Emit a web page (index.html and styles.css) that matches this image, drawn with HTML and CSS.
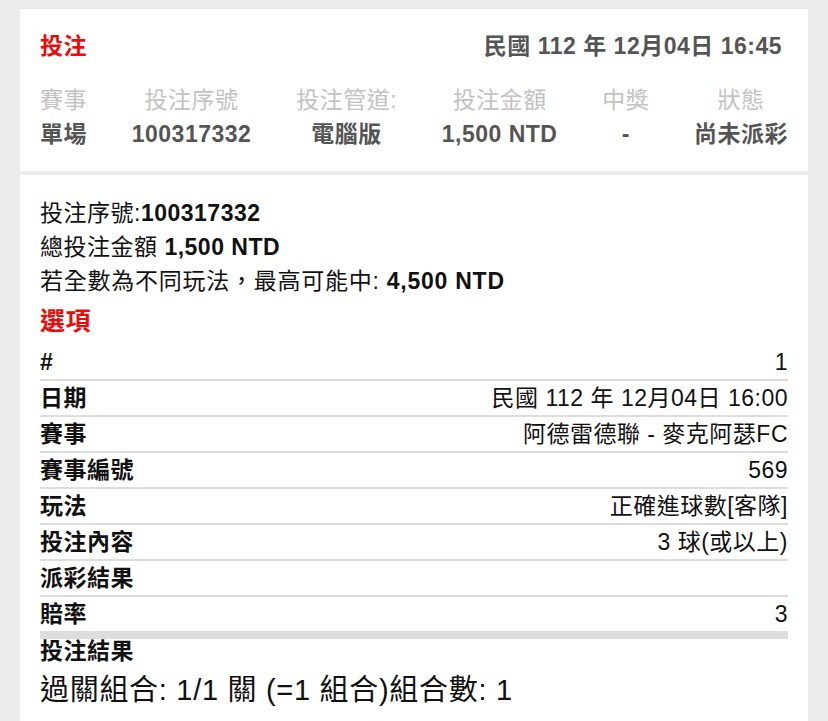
FILE: index.html
```html
<!DOCTYPE html>
<html lang="zh-Hant">
<head>
<meta charset="utf-8">
<title>投注</title>
<link rel="stylesheet" href="styles.css">
</head>
<body>
<div class="page">
  <section class="card summary">
    <div class="summary-head">
      <h1 class="title">投注</h1>
      <div class="date">民國 112 年 12月04日 16:45</div>
    </div>
    <div class="cols">
      <div class="col"><div class="lbl">賽事</div><div class="val">單場</div></div>
      <div class="col"><div class="lbl">投注序號</div><div class="val">100317332</div></div>
      <div class="col"><div class="lbl">投注管道:</div><div class="val">電腦版</div></div>
      <div class="col"><div class="lbl">投注金額</div><div class="val">1,500 NTD</div></div>
      <div class="col"><div class="lbl">中獎</div><div class="val">-</div></div>
      <div class="col"><div class="lbl">狀態</div><div class="val">尚未派彩</div></div>
    </div>
  </section>
  <section class="card detail">
    <div class="line">投注序號:<b>100317332</b></div>
    <div class="line">總投注金額 <b>1,500 NTD</b></div>
    <div class="line wide">若全數為不同玩法，最高可能中: <b>4,500 NTD</b></div>
    <h2 class="section-title">選項</h2>
    <div class="rows">
      <div class="row"><span class="k">#</span><span class="v">1</span></div>
      <div class="row"><span class="k">日期</span><span class="v">民國 112 年 12月04日 16:00</span></div>
      <div class="row"><span class="k">賽事</span><span class="v">阿德雷德聯 - 麥克阿瑟FC</span></div>
      <div class="row"><span class="k">賽事編號</span><span class="v">569</span></div>
      <div class="row"><span class="k">玩法</span><span class="v">正確進球數[客隊]</span></div>
      <div class="row"><span class="k">投注內容</span><span class="v">3 球(或以上)</span></div>
      <div class="row"><span class="k">派彩結果</span><span class="v"></span></div>
      <div class="row last"><span class="k">賠率</span><span class="v">3</span></div>
    </div>
    <div class="result-title">投注結果</div>
    <div class="result">過關組合: 1/1 關 (=1 組合)組合數: 1</div>
  </section>
</div>
</body>
</html>
```
FILE: styles.css
```css
html, body {
  margin: 0;
  padding: 0;
  background: #ececec;
}
body {
  font-family: "Liberation Sans", "Noto Sans CJK TC", sans-serif;
  font-size: 23px;
  letter-spacing: 0.5px;
  color: #111;
}
.page {
  padding: 9px 20px 0 20px;
  display: flex;
  flex-direction: column;
  gap: 4px;
}
.card {
  background: #fff;
}
.summary {
  padding: 20px 20px 20px 20px;
}
.summary-head {
  display: flex;
  justify-content: space-between;
  align-items: center;
  line-height: 34px;
}
.title {
  margin: 0;
  font-size: 23px;
  font-weight: bold;
  color: #ee0a0a;
}
.date {
  font-weight: bold;
  color: #555;
  margin-right: 6px;
}
.cols {
  margin-top: 20px;
  display: flex;
  justify-content: space-between;
  line-height: 34px;
}
.col {
  display: flex;
  flex-direction: column;
  align-items: center;
}
.lbl {
  color: #c2c2c2;
}
.val {
  color: #555;
  font-weight: bold;
}
.detail {
  padding: 21px 20px 40px 20px;
}
.line {
  line-height: 34px;
}
.line.wide {
  letter-spacing: 0.75px;
}
.line b {
  font-weight: bold;
}
.section-title {
  margin: 6px 0 7px;
  font-size: 25px;
  line-height: 34px;
  font-weight: bold;
  color: #ee0a0a;
}
.rows {
  display: flex;
  flex-direction: column;
}
.row {
  display: flex;
  justify-content: space-between;
  height: 34px;
  line-height: 34px;
  border-bottom: 2px solid #dddddd;
}
.row.last {
  border-bottom-width: 8px;
}
.k {
  font-weight: bold;
}
.v {
  text-align: right;
}
.result-title {
  font-weight: bold;
  line-height: 24px;
}
.result {
  margin-top: 9px;
  font-size: 29px;
  line-height: 36px;
  letter-spacing: 0.7px;
}
```
